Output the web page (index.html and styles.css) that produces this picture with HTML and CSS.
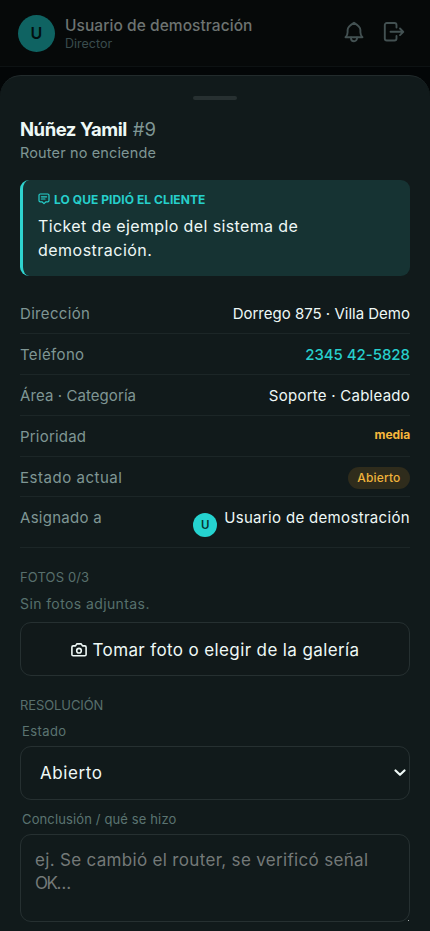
FILE: index.html
```html
<!DOCTYPE html>
<html lang="es">
<head>
<meta charset="utf-8">
<meta name="viewport" content="width=device-width, initial-scale=1">
<title>Núñez Yamil #9</title>
<link rel="stylesheet" href="styles.css">
</head>
<body>
<header class="topbar">
  <div class="avatar">U</div>
  <div class="who">
    <div class="who-name">Usuario de demostración</div>
    <div class="who-role">Director</div>
  </div>
  <svg class="icon-bell" width="22" height="22" viewBox="0 0 22 22"><path d="M2.500 16.200c1.500-1.300 2.100-2.700 2.100-5V9C4.600 5.600 8 3.600 11 1.800c3 1.800 6.400 3.800 6.400 7.200v2.200c0 2.300.6 3.700 2.100 5z"/><path d="M8 16.500v.8a3 3 0 0 0 6 0v-.8"/></svg>
  <svg class="icon-exit" width="22" height="22" viewBox="0 0 22 22"><path d="M13.500 6.500V4a2 2 0 0 0-2-2H3.800a2 2 0 0 0-2 2v13.500a2 2 0 0 0 2 2h7.700a2 2 0 0 0 2-2V15M7.500 10.800h12.600M17 7.500l3.300 3.300-3.300 3.300"/></svg>
</header>
<main class="sheet">
  <div class="handle"></div>
  <h1 class="title"><span class="title-name">Núñez Yamil</span><span class="title-id">#9</span></h1>
  <p class="subtitle">Router no enciende</p>
  <section class="callout">
    <div class="callout-label">
      <svg class="icon-note" width="12" height="12" viewBox="0 0 12 12"><path d="M2.300 1h7.400q1.300 0 1.300 1.300v5.200q0 1.300-1.300 1.300H8L6 10.600 4 8.800H2.300Q1 8.800 1 7.500V2.300Q1 1 2.300 1zM3.400 3.800h5.200M3.400 6h3.600"/></svg>
      <span>LO QUE PIDIÓ EL CLIENTE</span>
    </div>
    <p class="callout-text">Ticket de ejemplo del sistema de<br><span class="callout-last">demostración.</span></p>
  </section>
  <dl class="details">
    <div class="row"><dt class="k-dir">Dirección</dt><dd class="v-dir">Dorrego 875 · Villa Demo</dd></div>
    <div class="row"><dt class="k-tel">Teléfono</dt><dd class="v-tel">2345 42-5828</dd></div>
    <div class="row"><dt class="k-area">Área · Categoría</dt><dd class="v-area">Soporte · Cableado</dd></div>
    <div class="row"><dt class="k-prio">Prioridad</dt><dd class="v-prio">media</dd></div>
    <div class="row"><dt class="k-state">Estado actual</dt><dd class="badge">Abierto</dd></div>
    <div class="row row-user"><dt class="k-user">Asignado a</dt><dd class="assignee"><span class="avatar-small">U</span><span>Usuario de demostración</span></dd></div>
  </dl>
  <h2 class="section-title photos-title">FOTOS 0/3</h2>
  <p class="empty">Sin fotos adjuntas.</p>
  <button class="photo-button" type="button">
    <svg class="icon-camera" width="16" height="16" viewBox="0 0 16 16"><path d="M2.200 3.900h2.300L5.800 1.900h4.400l1.300 2h2.300q1.300 0 1.300 1.300v7.300q0 1.300-1.300 1.300H2.200Q.9 13.800.9 12.500V5.200q0-1.300 1.300-1.300z"/><circle cx="8" cy="8.700" r="2.300"/></svg>
    <span>Tomar foto o elegir de la galería</span>
  </button>
  <h2 class="section-title resolution-title">RESOLUCIÓN</h2>
  <div class="label label-state">Estado</div>
  <div class="select" role="combobox">
    <span>Abierto</span>
    <svg class="icon-chevron" width="12" height="8" viewBox="0 0 12 8"><path d="M1.500 1.500 6 5.800l4.500-4.300"/></svg>
  </div>
  <div class="label label-notes">Conclusión / qué se hizo</div>
  <div class="notes" role="textbox">ej. Se cambió el router, se verificó señal<br><span class="notes-last">OK…</span><i class="grip"></i></div>
</main>
</body>
</html>
```
FILE: styles.css
```css
* { box-sizing: border-box; }
html, body { margin: 0; height: 100%; }
body {
  background: #030607;
  color: #eef8f6;
  font-family: Inter, "Liberation Sans", sans-serif;
  height: 931px;
  overflow: hidden;
  display: flex;
  flex-direction: column;
}
h1, h2, p, dl, dd { margin: 0; font-weight: 400; }
svg { fill: none; stroke: currentColor; stroke-linecap: round; stroke-linejoin: round; flex: none; }

.topbar {
  height: 67px;
  flex: none;
  display: flex;
  align-items: center;
  padding: 0 25px 0 18px;
  background: #060909;
  border-bottom: 1px solid #0d1213;
  color: #435152;
}
.avatar {
  width: 37px; height: 37px;
  border-radius: 50%;
  background: #0f6362;
  color: #020f0f;
  font-weight: 600;
  font-size: 16px;
  display: grid;
  place-items: center;
}
.who { margin-left: 10px; flex: 1; white-space: nowrap; }
.who-name { font-size: 15.5px; font-weight: 500; line-height: 20px; letter-spacing: .06px; color: #6d7371; }
.who-role { font-size: 12.5px; line-height: 15px; letter-spacing: 0; color: #3a4c4d; }
.icon-bell { stroke-width: 1.9; margin-right: 18px; margin-top: -2px; }
.icon-exit { stroke-width: 1.9; margin-top: -2px; }

.sheet {
  margin-top: 8px;
  flex: 1;
  min-height: 0;
  background: #111a1b;
  border-top: 1px solid #222b2c;
  border-radius: 21px 21px 0 0;
  padding: 20px 20px 0;
}
.handle { width: 44px; height: 4px; border-radius: 2px; background: #273031; margin: 0 auto; }
.title { display: flex; gap: 6px; margin-top: 16px; font-size: 18.5px; line-height: 26px; }
.title-name { font-weight: 700; letter-spacing: -.48px; }
.title-id { color: #7f9694; }
.subtitle { font-size: 14.5px; line-height: 20px; margin-top: 1px; letter-spacing: .14px; color: #7f9694; }

.callout {
  height: 96px;
  margin-top: 17px;
  padding: 11px 15px 0;
  background: #163333;
  border-left: 3px solid #2fd3cf;
  border-radius: 9px;
}
.callout-label { display: flex; align-items: center; gap: 4px; height: 16px; font-size: 12px; font-weight: 700; letter-spacing: .07px; color: #26cfcb; }
.icon-note { stroke-width: 1.2; }
.callout-text { margin-top: 7px; font-size: 16px; line-height: 24px; letter-spacing: .38px; white-space: nowrap; }
.callout-last { letter-spacing: .48px; }

.details { margin-top: 17px; }
.row {
  height: 40.900px;
  display: flex;
  justify-content: space-between;
  align-items: flex-start;
  padding-top: 11px;
  border-bottom: 1px solid #1c2627;
  font-size: 15px;
  line-height: 20px;
  white-space: nowrap;
}
.row:first-child { padding-top: 10.500px; }
.row dt { color: #7f9694; }
.k-dir { letter-spacing: .33px; }
.k-tel { letter-spacing: .36px; }
.k-area { letter-spacing: .08px; }
.k-prio { letter-spacing: .2px; }
.k-state { letter-spacing: .53px; }
.k-user { letter-spacing: .28px; }
.v-dir { letter-spacing: 0; }
.v-tel { font-weight: 500; letter-spacing: -.03px; color: #27cfcc; }
.v-area { letter-spacing: .25px; }
.v-prio { font-size: 12px; line-height: 15px; font-weight: 700; letter-spacing: -.1px; color: #f6b73c; }
.badge {
  height: 22px;
  margin-top: -1px;
  padding: 0 9.500px;
  border-radius: 11px;
  background: #2f2c1c;
  color: #f0b33b;
  font-size: 12px;
  line-height: 22px;
  font-weight: 500;
  letter-spacing: .17px;
}
.row-user { height: 51px; }
.assignee { display: flex; gap: 7px; letter-spacing: .33px; }
.avatar-small {
  width: 24px; height: 24px;
  margin-top: 5px;
  border-radius: 50%;
  background: #25d3d0;
  color: #073130;
  font-size: 11.500px;
  font-weight: 600;
  letter-spacing: 0;
  display: grid;
  place-items: center;
}

.section-title { font-size: 13px; line-height: 18px; color: #586f6c; }
.photos-title { margin-top: 20px; letter-spacing: .12px; }
.empty { margin-top: 8px; font-size: 14px; line-height: 20px; letter-spacing: .4px; color: #57716d; }
.photo-button {
  display: flex;
  align-items: center;
  justify-content: center;
  gap: 6px;
  width: 100%;
  height: 54px;
  margin-top: 8px;
  padding: 1px 0 0;
  background: #11191a;
  border: 1px solid #263031;
  border-radius: 11px;
  color: inherit;
  font: 400 17px Inter, "Liberation Sans", sans-serif;
  letter-spacing: .38px;
}
.icon-camera { stroke-width: 1.6; }
.resolution-title { margin-top: 20px; letter-spacing: -.1px; }
.label { padding-left: 2px; font-size: 13px; line-height: 18px; color: #5b7471; }
.label-state { margin-top: 8px; letter-spacing: .4px; }
.select {
  display: flex;
  align-items: center;
  justify-content: space-between;
  height: 54px;
  margin-top: 6px;
  padding: 0 3px 0 19px;
  border: 1px solid #263031;
  border-radius: 11px;
  font-size: 17px;
  letter-spacing: .58px;
}
.icon-chevron { stroke-width: 2.200; }
.label-notes { margin-top: 10px; letter-spacing: .13px; }
.notes {
  position: relative;
  height: 88px;
  margin-top: 6px;
  padding: 14px 14px 0;
  border: 1px solid #263031;
  border-radius: 11px;
  color: #747978;
  font-size: 17px;
  line-height: 23px;
  letter-spacing: .32px;
  white-space: nowrap;
}
.notes-last { letter-spacing: -1.500px; }
.grip { position: absolute; right: 0; bottom: 0; width: 1px; height: 1px; background: #a8adad; }
```
